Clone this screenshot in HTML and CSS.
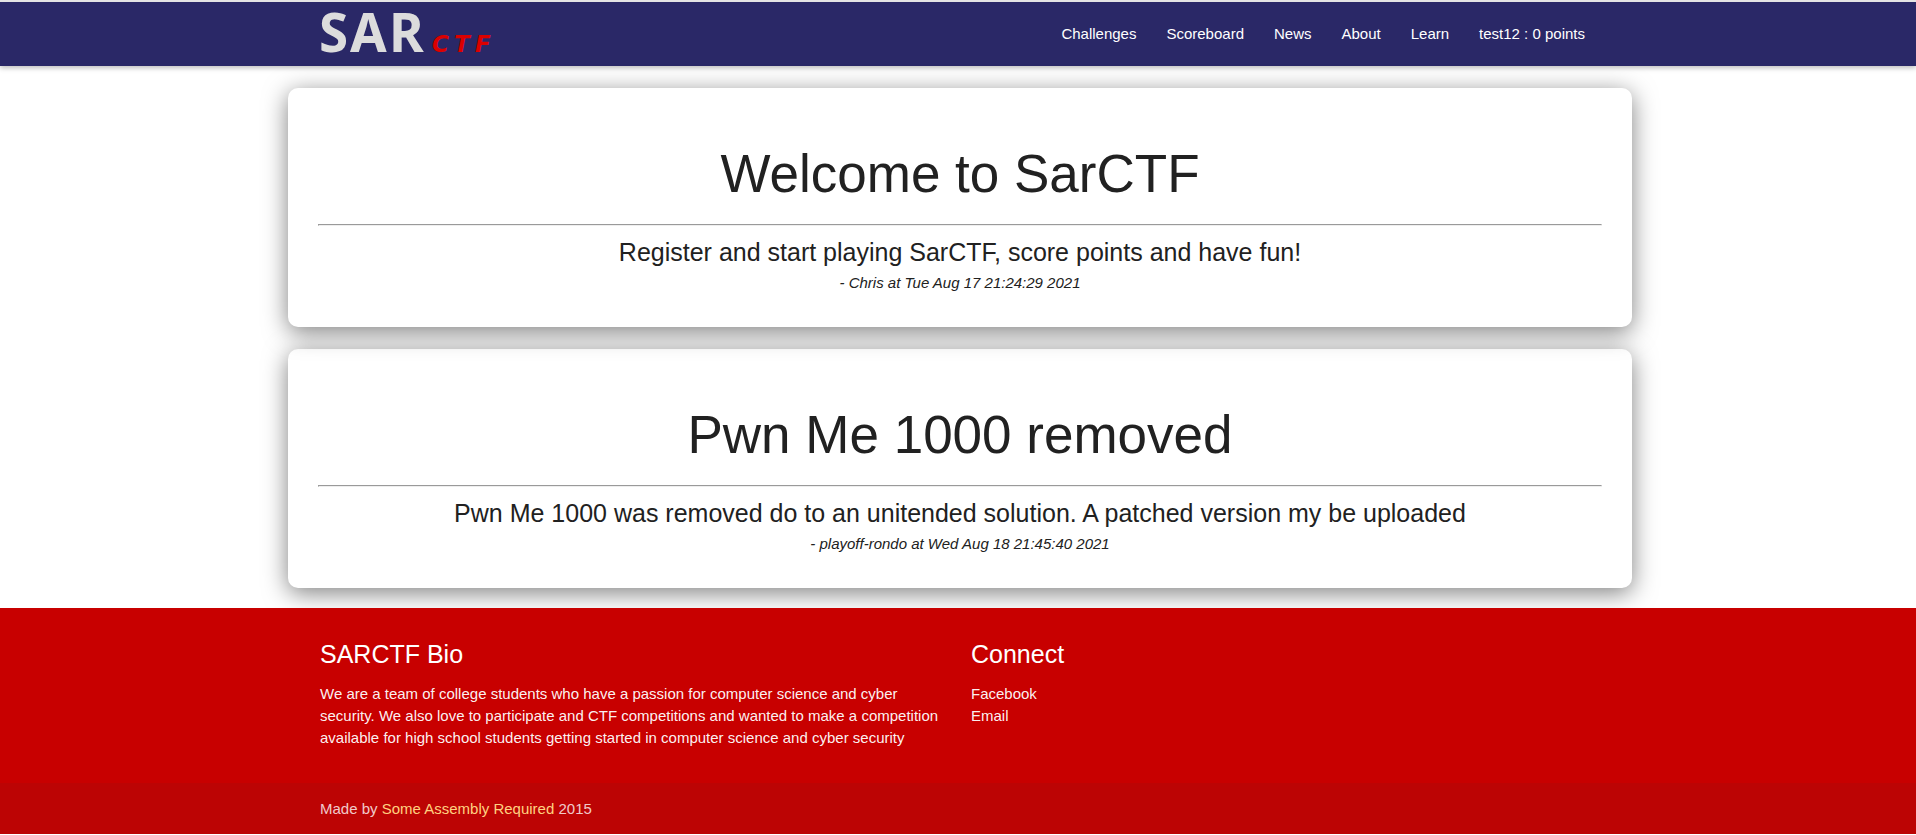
FILE: index.html
```
<!DOCTYPE html>
<html lang="en">
<head>
<meta charset="utf-8">
<title>SarCTF</title>
<link rel="stylesheet" href="styles.css">
</head>
<body>
<header class="navbar">
  <div class="container navbar-inner">
    <a class="logo" href="#" aria-label="SAR CTF">
      <svg width="176" height="64" viewBox="0 0 176 64">
        <text class="logo-sar" x="-1 30 69" y="50">SAR</text>
        <text class="logo-ctf" x="112 134 155" y="50">CTF</text>
      </svg>
    </a>
    <nav class="nav-links">
      <a href="#">Challenges</a>
      <a href="#">Scoreboard</a>
      <a href="#">News</a>
      <a href="#">About</a>
      <a href="#">Learn</a>
      <a href="#">test12 : 0 points</a>
    </nav>
  </div>
</header>

<main class="news">
  <article class="card card-latest">
    <h2>Welcome to SarCTF</h2>
    <hr>
    <h5>Register and start playing SarCTF, score points and have fun!</h5>
    <p class="byline">- Chris at Tue Aug 17 21:24:29 2021</p>
  </article>
  <article class="card">
    <h2>Pwn Me 1000 removed</h2>
    <hr>
    <h5>Pwn Me 1000 was removed do to an unitended solution. A patched version my be uploaded</h5>
    <p class="byline">- playoff-rondo at Wed Aug 18 21:45:40 2021</p>
  </article>
</main>

<footer class="footer">
  <div class="footer-body">
    <div class="container footer-columns">
      <section>
        <h5>SARCTF Bio</h5>
        <p>We are a team of college students who have a passion for computer science and cyber security. We also love to participate and CTF competitions and wanted to make a competition available for high school students getting started in computer science and cyber security</p>
      </section>
      <section>
        <h5>Connect</h5>
        <ul>
          <li><a href="#">Facebook</a></li>
          <li><a href="#">Email</a></li>
        </ul>
      </section>
    </div>
  </div>
  <div class="copyright">
    <div class="container">Made by <a href="#">Some Assembly Required</a> 2015</div>
  </div>
</footer>
</body>
</html>
```
FILE: styles.css
```
* {
  box-sizing: border-box;
}

body {
  margin: 0;
  background: #fff;
  color: #212121;
  font: 15px/22px "Liberation Sans", Arial, sans-serif;
}

h2, h5, p, ul {
  margin: 0;
  padding: 0;
  font-weight: 400;
}

ul {
  list-style: none;
}

a {
  color: inherit;
  text-decoration: none;
}

.container {
  width: 90%;
  max-width: 1280px;
  margin: 0 auto;
}

.navbar {
  padding-left: 4px;
  border-top: 2px solid #e4e4e4;
  background: #2a2867;
  color: #fff;
  box-shadow: 0 2px 5px rgba(0, 0, 0, .26);
}

.navbar-inner {
  display: flex;
  justify-content: space-between;
}

.logo svg {
  display: block;
  overflow: visible;
}

.logo-sar {
  fill: #dcdcdc;
  font: 700 53px "Noto Sans", sans-serif;
}

.logo-ctf {
  fill: #dc0000;
  font: italic 700 23px "DejaVu Sans", sans-serif;
}

.nav-links {
  display: flex;
  line-height: 64px;
}

.nav-links a {
  padding: 0 15px;
}

.news {
  display: grid;
  grid-template-columns: minmax(0, 1344px);
  justify-content: center;
  gap: 22px;
  padding: 22px 0 20px 4px;
}

.card {
  padding: 56px 30px 32px;
  border-radius: 10px;
  background: #fff;
  text-align: center;
  box-shadow: 0 5px 25px rgba(0, 0, 0, .5);
}

.card-latest {
  z-index: 1;
}

.card h2 {
  font-size: 53px;
  line-height: 59px;
}

.card hr {
  margin: 21px 0 13px;
}

h5 {
  font-size: 25px;
  line-height: 27px;
}

.byline {
  margin-top: 6px;
  padding-bottom: 1px;
  font-style: italic;
}

.footer {
  position: relative;
  z-index: 2;
  background: #c80000;
  color: #fff;
}

.footer-body {
  padding: 33px 0 34px 4px;
}

.footer-columns {
  display: grid;
  grid-template-columns: 1fr 1fr;
  gap: 22px;
}

.footer-columns h5 {
  margin-bottom: 15px;
}

.footer-columns p,
.footer-columns ul {
  color: rgba(255, 255, 255, .96);
}

.copyright {
  padding-left: 4px;
  background: rgba(51, 51, 51, .08);
  color: rgba(255, 255, 255, .8);
  line-height: 51px;
}

.copyright a {
  color: #ffd180;
}
```
